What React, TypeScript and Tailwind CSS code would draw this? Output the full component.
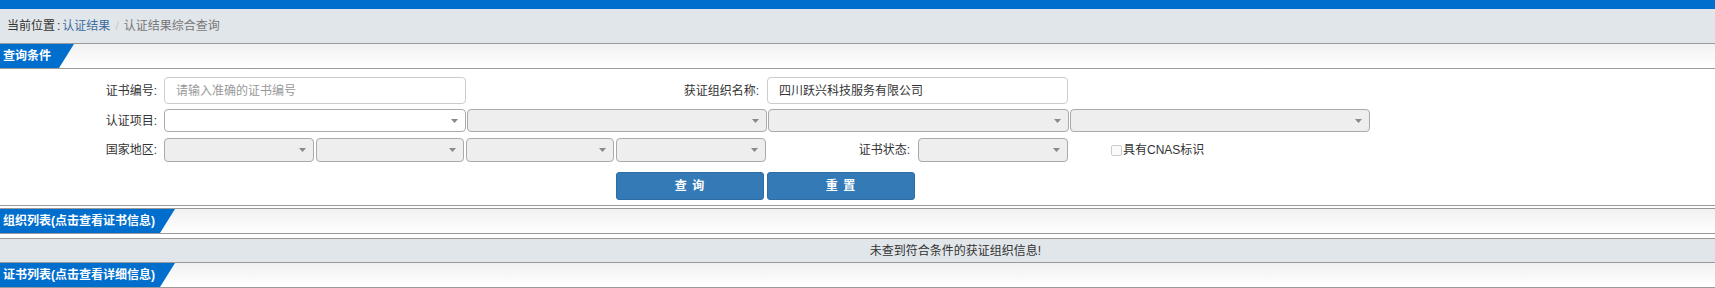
import { FC, ReactNode } from "react";

const font = "font-['Liberation_Sans','Noto_Sans_CJK_SC',sans-serif]";

const SectionHeader: FC<{ title: string; width: string; topBorder?: boolean }> = ({
  title,
  width,
  topBorder,
}) => (
  <div
    className={`flex h-[25px] border-b border-[#9a9a9a] bg-gradient-to-b from-[#f1f1f1] to-white ${
      topBorder ? "h-[26px] border-t" : ""
    }`}
  >
    <div
      className={`${width} flex h-full items-center bg-[#006ecd] pl-[3px] text-[12px] font-bold text-white [clip-path:polygon(0_0,100%_0,calc(100%-15px)_100%,0_100%)]`}
    >
      {title}
    </div>
  </div>
);

const Arrow = () => (
  <svg width="7" height="4" viewBox="0 0 7 4" className="shrink-0">
    <path d="M0 0h7L3.5 4z" fill="#888" />
  </svg>
);

const Select: FC<{ width: string; height: string; enabled?: boolean; className?: string }> = ({
  width,
  height,
  enabled,
  className = "",
}) => (
  <div
    className={`${width} ${height} ${className} flex items-center justify-end rounded-[4px] border border-[#aaa] pr-[7px] ${
      enabled ? "bg-white" : "bg-[#eee]"
    }`}
  >
    <Arrow />
  </div>
);

const Label: FC<{ width: string; children: ReactNode }> = ({ width, children }) => (
  <div className={`${width} shrink-0 text-right text-[12px] text-[#333]`}>{children}</div>
);

const App: FC = () => {
  return (
    <div className={`w-[1715px] h-[288px] overflow-hidden bg-white ${font}`}>
      <div className="h-[9px] bg-[#006ecd]" />

      <div className="flex h-[35px] items-center border-b border-[#9a9a9a] bg-[#e1e6ea] pl-[7px] text-[12px]">
        <span className="text-[#333]">当前位置</span>
        <span className="mx-[2px] text-[#333]">:</span>
        <span className="text-[#3d6d9c]">认证结果</span>
        <span className="mx-[5px] text-[#c8c8c8]">/</span>
        <span className="text-[#777]">认证结果综合查询</span>
      </div>

      <SectionHeader title="查询条件" width="w-[74px]" />

      <div className="h-[137px] border-b border-[#9a9a9a] pt-[8px]">
        <div className="flex h-[27px] items-center">
          <Label width="w-[157px]">证书编号:</Label>
          <div className="ml-[7px] flex h-[27px] w-[302px] items-center rounded-[4px] border border-[#ccc] pl-[11px] text-[12px] text-[#999]">
            请输入准确的证书编号
          </div>
          <Label width="w-[293px]">获证组织名称:</Label>
          <div className="ml-[8px] flex h-[27px] w-[301px] items-center rounded-[4px] border border-[#ccc] pl-[11px] text-[12px] text-[#333]">
            四川跃兴科技服务有限公司
          </div>
        </div>

        <div className="mt-[5px] flex h-[23px] items-center">
          <Label width="w-[157px]">认证项目:</Label>
          <Select width="w-[302px]" height="h-[23px]" enabled className="ml-[7px]" />
          <Select width="w-[300px]" height="h-[23px]" className="ml-[1px]" />
          <Select width="w-[301px]" height="h-[23px]" className="ml-[1px]" />
          <Select width="w-[300px]" height="h-[23px]" className="ml-[1px]" />
        </div>

        <div className="mt-[6px] flex h-[24px] items-center">
          <Label width="w-[157px]">国家地区:</Label>
          <Select width="w-[150px]" height="h-[24px]" className="ml-[7px]" />
          <Select width="w-[148px]" height="h-[24px]" className="ml-[2px]" />
          <Select width="w-[148px]" height="h-[24px]" className="ml-[2px]" />
          <Select width="w-[150px]" height="h-[24px]" className="ml-[2px]" />
          <Label width="w-[144px]">证书状态:</Label>
          <Select width="w-[150px]" height="h-[24px]" className="ml-[8px]" />
          <div className="ml-[43px] flex items-center text-[12px] text-[#333]">
            <span className="mr-[1px] inline-block h-[11px] w-[11px] rounded-[2px] border border-[#ccc] bg-[#fafafa]" />
            具有CNAS标识
          </div>
        </div>

        <div className="mt-[10px] flex h-[28px] pl-[616px]">
          <button className="h-[28px] w-[148px] rounded-[3px] border border-[#2e6da4] bg-[#337ab7] text-[12px] font-bold tracking-[1px] text-white">
            查 询
          </button>
          <button className="ml-[3px] h-[28px] w-[148px] rounded-[3px] border border-[#2e6da4] bg-[#337ab7] text-[12px] font-bold tracking-[1px] text-white">
            重 置
          </button>
        </div>
      </div>

      <div className="h-[2px]" />
      <SectionHeader title="组织列表(点击查看证书信息)" width="w-[175px]" topBorder />

      <div className="h-[4px]" />
      <div className="flex h-[25px] items-center border-y border-[#9a9a9a] bg-[#e1e6ea] pl-[196px] text-[12px] text-[#333]">
        <div className="flex-1 text-center">未查到符合条件的获证组织信息!</div>
      </div>

      <SectionHeader title="证书列表(点击查看详细信息)" width="w-[175px]" />
    </div>
  );
};

export default App;
